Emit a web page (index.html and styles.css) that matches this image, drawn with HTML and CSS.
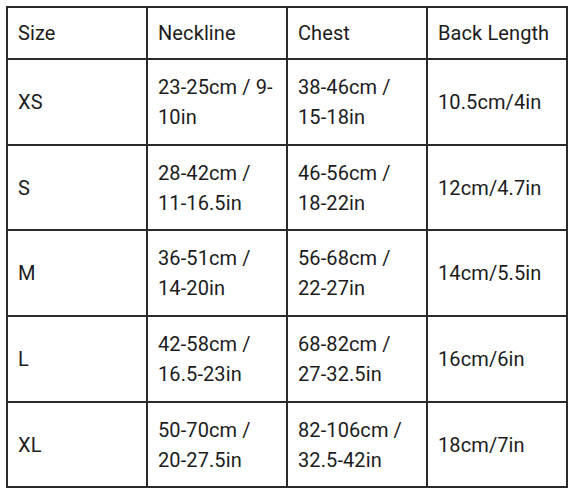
FILE: index.html
```html
<!DOCTYPE html>
<html>
<head>
<meta charset="utf-8">
<link rel="stylesheet" href="styles.css">
</head>
<body>
<div class="chart">
  <div class="cell head">Size</div>
  <div class="cell head">Neckline</div>
  <div class="cell head">Chest</div>
  <div class="cell head">Back Length</div>

  <div class="cell">XS</div>
  <div class="cell">23-25cm / 9-<br>10in</div>
  <div class="cell">38-46cm /<br>15-18in</div>
  <div class="cell">10.5cm/4in</div>

  <div class="cell">S</div>
  <div class="cell">28-42cm /<br>11-16.5in</div>
  <div class="cell">46-56cm /<br>18-22in</div>
  <div class="cell">12cm/4.7in</div>

  <div class="cell">M</div>
  <div class="cell">36-51cm /<br>14-20in</div>
  <div class="cell">56-68cm /<br>22-27in</div>
  <div class="cell">14cm/5.5in</div>

  <div class="cell">L</div>
  <div class="cell">42-58cm /<br>16.5-23in</div>
  <div class="cell">68-82cm /<br>27-32.5in</div>
  <div class="cell">16cm/6in</div>

  <div class="cell">XL</div>
  <div class="cell">50-70cm /<br>20-27.5in</div>
  <div class="cell">82-106cm /<br>32.5-42in</div>
  <div class="cell">18cm/7in</div>
</div>
</body>
</html>
```
FILE: styles.css
```css
html, body {
  margin: 0;
  background: #fff;
}
body {
  padding: 6px 6px;
  font-family: Roboto, "Liberation Sans", sans-serif;
  color: #1c1c1c;
}
.chart {
  display: grid;
  width: max-content;
  grid-template-columns: repeat(4, 138px);
  grid-template-rows: 50px 84px 83px 84px 84px 83px;
  gap: 2px;
  padding: 2px;
  background: #2a2a2a;
}
.cell {
  background: #fff;
  display: flex;
  align-items: center;
  padding: 0 0 0 10px;
  font-size: 20px;
  line-height: 30px;
  letter-spacing: 0.1px;
}
```
